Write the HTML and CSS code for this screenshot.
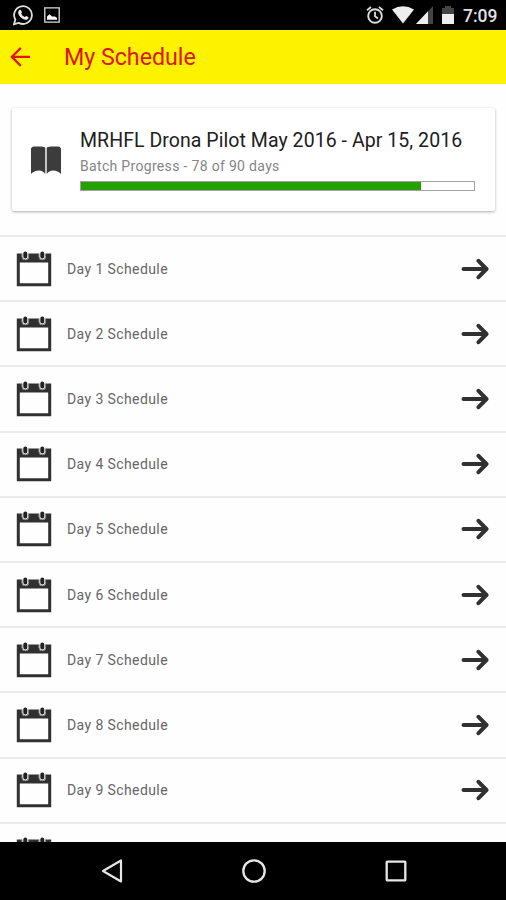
FILE: index.html
```html
<!DOCTYPE html>
<html lang="en">
<head>
<meta charset="utf-8">
<title>My Schedule</title>
<link rel="stylesheet" href="styles.css">
</head>
<body>
<svg class="defs" aria-hidden="true">
  <symbol id="calendar" viewBox="0 0 36 36">
    <path fill="#303030" fill-rule="evenodd" d="M.8 2.500H35.200V35.300H.8ZM3.800 11.500V32.300H32.200V11.500Z"/>
    <path fill="none" stroke="#fff" stroke-width="7" stroke-linecap="round" d="M9.300 1.500V5.500M26.300 1.500V5.500"/>
    <path fill="none" stroke="#777" stroke-width="1" d="M6 2.500V5.500a3.300 3.300 0 0 0 6.600 0V2.500M23 2.500V5.500a3.300 3.300 0 0 0 6.600 0V2.500"/>
    <path fill="none" stroke="#222" stroke-width="4" stroke-linecap="round" d="M9.300 2.500V5.400M26.300 2.500V5.400"/>
  </symbol>
  <symbol id="arrow" viewBox="0 0 28 22">
    <path fill="none" stroke="#303030" stroke-width="4" stroke-linecap="round" stroke-linejoin="round" d="M2.500 11H25M17.500 2.800L25.500 11L17.500 19.200"/>
  </symbol>
</svg>
<div class="phone">
  <div class="status">
    <svg class="whatsapp" viewBox="0 0 22 22"><path fill="none" stroke="#ddd" stroke-width="1.800" d="M2 20.200L3.300 15.500A8.900 8.900 0 1 1 6.800 18.900Z"/><path fill="#eee" d="M7.200 6.200c.8-.8 1.700-.6 2 .2l.7 1.800c.2.500-.8 1.200-.6 1.600.7 1.500 1.800 2.500 3.300 3.100.5.200 1.100-1.200 1.600-1l2 1c.7.400.2 1.700-.5 2.300-2 1.500-5 .2-7-1.900-2.200-2.100-3.500-5.200-1.500-7.100Z"/></svg>
    <svg class="picture" viewBox="0 0 16 16"><path fill="none" stroke="#ddd" stroke-width="1.300" d="M.8.8H15.200V15.200H.8Z"/><path fill="#fff" d="M3 12.800V9.500L5.500 7.300L8 9.500H11L13 11V12.800Z"/></svg>
    <span class="spacer"></span>
    <svg class="alarm" viewBox="0 0 18 18"><circle cx="9" cy="10" r="6.800" fill="none" stroke="#ddd" stroke-width="1.900"/><path fill="none" stroke="#ddd" stroke-width="1.800" d="M1 4.200L5 1M17 4.200L13 1M9 5.800V10.200L12 12.500"/></svg>
    <svg class="wifi" viewBox="0 0 22 18"><path fill="#eee" d="M0 3.500Q11-3 22 3.500L11 17.500Z"/></svg>
    <svg class="signal" viewBox="0 0 17 18"><path fill="#444" d="M0 18L17 0V18Z"/><path fill="#eee" d="M0 18L12 5.200V18Z"/></svg>
    <svg class="battery" viewBox="0 0 12 18"><path fill="#444" d="M0 2H3V0H9V2H12V8H0Z"/><path fill="#eee" d="M0 8H12V18H0Z"/></svg>
    <span class="clock">7:09</span>
  </div>
  <header class="bar">
    <svg class="back" viewBox="0 0 20 20"><path fill="none" stroke="#e0180c" stroke-width="2.200" d="M20 9.900H2M10.800 .9L1.800 9.900L10.800 18.900"/></svg>
    <h1>My Schedule</h1>
  </header>
  <main>
    <section class="card">
      <svg class="book" viewBox="0 0 30 29"><path fill="#3c3c3c" d="M0 3Q0 1 3 .5H10Q13.800.5 14.300 2V28Q12 24.500 8 24.500Q3 24.500 0 28ZM15.700 2Q16.200.5 20 .5H27Q30 1 30 3V28Q27 24.500 22 24.500Q18 24.500 15.700 28Z"/></svg>
      <div class="batch">
        <h2>MRHFL Drona Pilot May 2016 - Apr 15, 2016</h2>
        <p>Batch Progress - 78 of 90 days</p>
        <div class="progress"><div class="fill"></div></div>
      </div>
    </section>
    <ul class="days">
      <li><svg class="cal"><use href="#calendar"/></svg><span>Day 1 Schedule</span><svg class="go"><use href="#arrow"/></svg></li>
      <li><svg class="cal"><use href="#calendar"/></svg><span>Day 2 Schedule</span><svg class="go"><use href="#arrow"/></svg></li>
      <li><svg class="cal"><use href="#calendar"/></svg><span>Day 3 Schedule</span><svg class="go"><use href="#arrow"/></svg></li>
      <li><svg class="cal"><use href="#calendar"/></svg><span>Day 4 Schedule</span><svg class="go"><use href="#arrow"/></svg></li>
      <li><svg class="cal"><use href="#calendar"/></svg><span>Day 5 Schedule</span><svg class="go"><use href="#arrow"/></svg></li>
      <li><svg class="cal"><use href="#calendar"/></svg><span>Day 6 Schedule</span><svg class="go"><use href="#arrow"/></svg></li>
      <li><svg class="cal"><use href="#calendar"/></svg><span>Day 7 Schedule</span><svg class="go"><use href="#arrow"/></svg></li>
      <li><svg class="cal"><use href="#calendar"/></svg><span>Day 8 Schedule</span><svg class="go"><use href="#arrow"/></svg></li>
      <li><svg class="cal"><use href="#calendar"/></svg><span>Day 9 Schedule</span><svg class="go"><use href="#arrow"/></svg></li>
      <li><svg class="cal"><use href="#calendar"/></svg></li>
    </ul>
  </main>
  <nav class="nav">
    <svg class="nav-back" viewBox="0 0 22 24"><path fill="none" stroke="#e6e6e6" stroke-width="2.200" stroke-linejoin="round" d="M2 12L20 1.500V22.500Z"/></svg>
    <svg class="nav-home" viewBox="0 0 24 24"><circle cx="12" cy="12" r="10.700" fill="none" stroke="#e6e6e6" stroke-width="2.300"/></svg>
    <svg class="nav-recent" viewBox="0 0 22 22"><rect x="1.700" y="1.700" width="18.600" height="18.600" rx=".5" fill="none" stroke="#e6e6e6" stroke-width="2.300"/></svg>
  </nav>
</div>
</body>
</html>
```
FILE: styles.css
```css
* { box-sizing: border-box; margin: 0; padding: 0; }
body { font-family: Roboto, sans-serif; background: #fff; }
svg { display: block; flex: none; }
.defs { width: 0; height: 0; position: absolute; }
.phone { width: 506px; height: 900px; display: flex; flex-direction: column; overflow: hidden; }

.status { height: 30px; flex: none; background: #000; display: flex; align-items: center; padding: 0 9px 0 12px; }
.whatsapp { width: 22px; height: 22px; }
.picture { width: 16px; height: 16px; margin-left: 10px; }
.spacer { flex: 1; }
.alarm { width: 18px; height: 18px; margin-right: 8px; }
.wifi { width: 22px; height: 18px; margin-right: 2px; }
.signal { width: 17px; height: 18px; margin-right: 9px; }
.battery { width: 12px; height: 18px; margin-right: 9px; }
.clock { width: 34px; color: #e2e2e2; font-size: 17.500px; font-weight: 500; line-height: 30px; white-space: nowrap; padding-top: 2px; }

.bar { height: 54px; flex: none; background: #fdf200; display: flex; align-items: center; padding-left: 10px; }
.back { width: 20px; height: 20px; }
.bar h1 { margin-left: 34px; color: #db1710; font-size: 23.200px; font-weight: 400; line-height: 28px; white-space: nowrap; }

main { flex: 1; min-height: 0; overflow: hidden; background: #fefefe; }
.card { margin: 24px 11px 24px 12px; height: 103px; display: flex; align-items: flex-start; padding: 21px 20px 0 19px; background: #fff; border-radius: 2px; box-shadow: 0 1px 3px rgba(0, 0, 0, .32); }
.book { width: 30px; height: 29px; margin: 17px 19px 0 0; }
.batch { flex: 1; min-width: 0; }
.card h2 { font-size: 19.500px; line-height: 24px; font-weight: 400; letter-spacing: .06px; color: #202020; white-space: nowrap; }
.card p { font-size: 14px; line-height: 18px; margin-top: 4px; letter-spacing: .32px; color: #858585; white-space: nowrap; }
.progress { height: 10px; margin-top: 6px; border: 1px solid #a2a2a2; background: #fff; }
.fill { height: 100%; width: 86.600%; background: #26a000; }

.days { list-style: none; border-top: 2px solid #ebebeb; }
.days li { height: 65.200px; display: flex; align-items: center; padding: 0 17px 0 16px; border-bottom: 2px solid #ebebeb; }
.days span { flex: 1; margin-left: 15px; font-size: 14px; letter-spacing: .4px; color: #666; white-space: nowrap; }
.cal { width: 36px; height: 36px; }
.go { width: 28px; height: 22px; }

.nav { height: 58px; flex: none; background: #000; display: flex; align-items: center; padding-left: 101px; }
.nav-back { width: 22px; height: 24px; }
.nav-home { width: 24px; height: 24px; margin-left: 119px; }
.nav-recent { width: 22px; height: 22px; margin-left: 119px; }
```
